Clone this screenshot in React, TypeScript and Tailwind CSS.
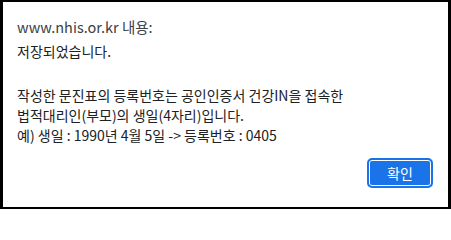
export default function App() {
  return (
    <div className="w-[451px] h-[209px] bg-black pl-[3px] pr-[3px] pt-[2px] pb-[2px]">
      <div
        className="w-full h-full bg-white flex flex-col text-[#202124] pl-[14px] pr-[15px] pt-[15px]"
        style={{ fontFamily: '"Noto Sans CJK KR", "Noto Sans", sans-serif' }}
      >
        <div className="text-[14.5px] leading-[20px] text-[#3c4043]">www.nhis.or.kr 내용:</div>
        <div className="mt-[4px] text-[14px] leading-[20px]">저장되었습니다.</div>
        <div className="mt-[24px] text-[14px] leading-[20px]">
          <p>작성한 문진표의 등록번호는 공인인증서 건강IN을 접속한</p>
          <p>법적대리인(부모)의 생일(4자리)입니다.</p>
          <p>예) 생일 : 1990년 4월 5일 -&gt; 등록번호 : 0405</p>
        </div>
        <div className="flex justify-end mt-[13px]">
          <button className="w-[66px] h-[30px] rounded-[5px] bg-[#1a73e8] border-2 border-[#1a73e8] ring-1 ring-inset ring-white text-white text-[14px] flex items-center justify-center">
            확인
          </button>
        </div>
      </div>
    </div>
  )
}
